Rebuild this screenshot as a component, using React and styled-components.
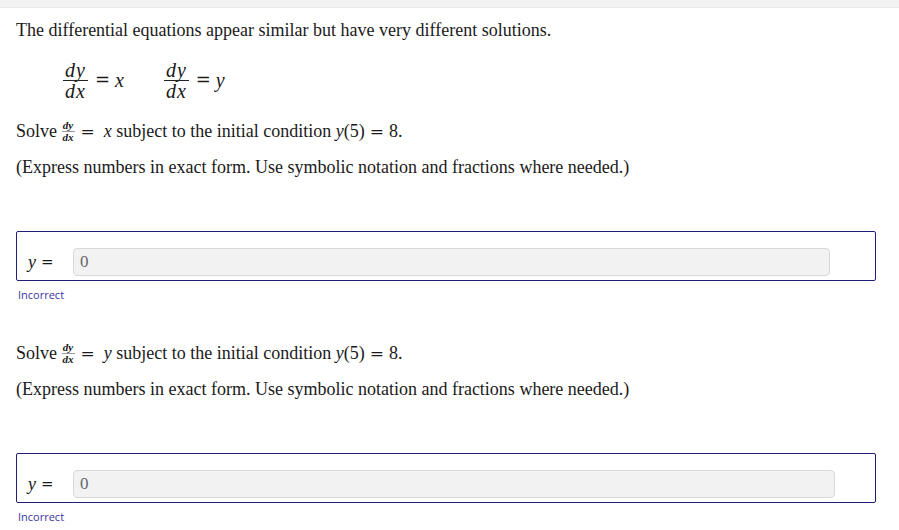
import styled, { createGlobalStyle } from "styled-components";

const GlobalStyle = createGlobalStyle`
  html, body {
    margin: 0;
    padding: 0;
    background: #ffffff;
  }
  body {
    font-family: "Liberation Serif", "Times New Roman", serif;
    color: #1a1a1a;
  }
`;

const Page = styled.div`
  width: 899px;
  height: 530px;
  overflow: hidden;
  background: #ffffff;
`;

const TopBar = styled.div`
  height: 7px;
  background: #f2f2f2;
  border-bottom: 1px solid #e8e8e8;
`;

const Content = styled.div`
  padding: 0 23px 0 16px;
`;

const Intro = styled.p`
  margin: 11px 0 0;
  font-size: 18px;
  line-height: 22px;
`;

const DisplayRow = styled.div`
  display: flex;
  align-items: center;
  gap: 40px;
  margin: 18px 0 0 47px;
  height: 42px;
`;

const Equation = styled.div`
  display: flex;
  align-items: center;
  font-family: "Liberation Serif", serif;
  font-size: 20px;
`;

const Frac = styled.span`
  display: inline-flex;
  flex-direction: column;
  align-items: center;
  font-family: "Liberation Serif", serif;
  font-style: italic;
  font-size: ${(p) => (p.$small ? "11px" : "20px")};
  font-weight: ${(p) => (p.$small ? "bold" : "normal")};
  line-height: ${(p) => (p.$small ? "11px" : "20px")};
  letter-spacing: ${(p) => (p.$small ? "0" : "1px")};
`;

const Num = styled.span`
  padding: 0 ${(p) => (p.$small ? 1 : 2)}px;
`;

const Den = styled.span`
  padding: 0 ${(p) => (p.$small ? 1 : 2)}px;
  border-top: 1px solid ${(p) => (p.$small ? "#999" : "#222")};
`;

const Equals = styled.span`
  display: inline-block;
  font-family: "DejaVu Serif", serif;
  font-style: normal;
  font-size: ${(p) => p.$size}px;
  line-height: 1;
  margin: 0 ${(p) => p.$after}px 0 ${(p) => p.$before}px;
`;

const Var = styled.i`
  font-style: italic;
`;

const Solve = styled.p`
  margin: ${(p) => p.$top}px 0 0;
  font-size: 18px;
  line-height: 30px;
  display: flex;
  align-items: center;
  white-space: pre;
`;

const Note = styled.p`
  margin: 10px 0 0;
  font-size: 18px;
  line-height: 22px;
`;

const AnswerBox = styled.div`
  margin-top: 53px;
  height: 44px;
  box-sizing: content-box;
  border: 1px solid #221d7a;
  border-radius: 2px;
  display: flex;
  align-items: flex-end;
  padding: 0 ${(p) => p.$right}px 4px 11px;
`;

const Label = styled.span`
  width: 45px;
  height: 28px;
  display: flex;
  align-items: center;
  font-size: 18px;
  white-space: pre;
`;

const Field = styled.div`
  flex: 1;
  height: 26px;
  background: #f2f2f2;
  border: 1px solid #d9d9d9;
  border-radius: 4px;
  display: flex;
  align-items: center;
  padding-left: 6px;
  font-size: 17px;
  color: #666;
`;

const Status = styled.div`
  margin-top: 7px;
  font-family: "Open Sans", "DejaVu Sans", sans-serif;
  font-size: 11px;
  line-height: 14px;
  color: #3a34a6;
  padding-left: 2px;
`;

const Fraction = ({ small, top, bottom }) => (
  <Frac $small={small}>
    <Num $small={small}>{top}</Num>
    <Den $small={small}>{bottom}</Den>
  </Frac>
);

const Question = ({ rhs, top, right }) => (
  <>
    <Solve $top={top}>
      {"Solve "}
      <Fraction small top="dy" bottom="dx" />
      <Equals $size={17} $before={6} $after={9}>=</Equals>
      <Var>{rhs}</Var>
      {" subject to the initial condition "}
      <Var>y</Var>
      {"(5)"}
      <Equals $size={17} $before={5} $after={5}>=</Equals>
      {"8."}
    </Solve>
    <Note>(Express numbers in exact form. Use symbolic notation and fractions where needed.)</Note>
    <AnswerBox $right={right}>
      <Label>
        <Var>y</Var>
        <Equals $size={15} $before={5} $after={0}>=</Equals>
      </Label>
      <Field>0</Field>
    </AnswerBox>
    <Status>Incorrect</Status>
  </>
);

export default function App() {
  return (
    <Page>
      <GlobalStyle />
      <TopBar />
      <Content>
        <Intro>The differential equations appear similar but have very different solutions.</Intro>
        <DisplayRow>
          <Equation>
            <Fraction top="dy" bottom="dx" />
            <Equals $size={18} $before={7} $after={5}>=</Equals>
            <Var>x</Var>
          </Equation>
          <Equation>
            <Fraction top="dy" bottom="dx" />
            <Equals $size={18} $before={7} $after={5}>=</Equals>
            <Var>y</Var>
          </Equation>
        </DisplayRow>
        <Question rhs="x" top={15} right={45} />
        <Question rhs="y" top={36} right={40} />
      </Content>
    </Page>
  );
}
